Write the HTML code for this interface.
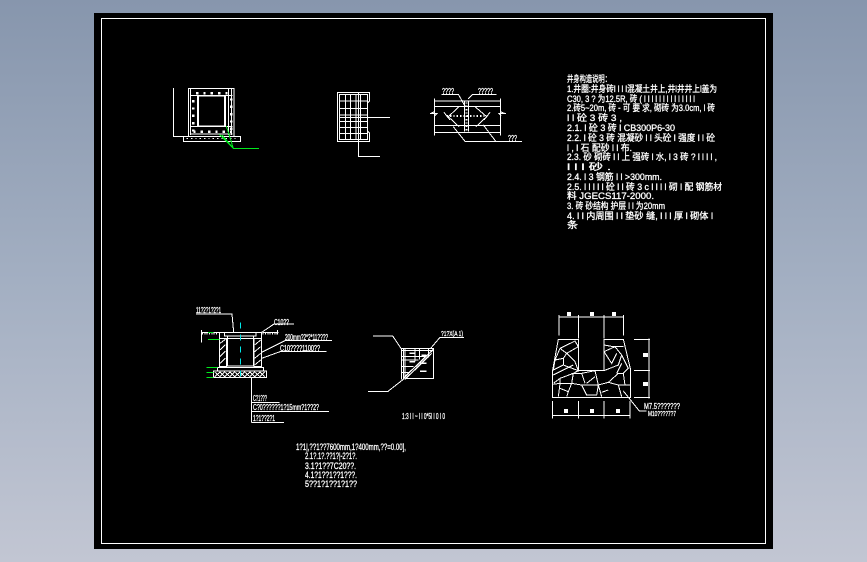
<!DOCTYPE html>
<html><head><meta charset="utf-8"><title>CAD</title>
<style>
html,body{margin:0;padding:0;width:867px;height:562px;overflow:hidden;background:linear-gradient(180deg,#8796ad 0%,#a3afc2 50%,#c2c6d3 100%);}
svg{position:absolute;left:0;top:0;display:block;shape-rendering:crispEdges}
text{font-family:"Liberation Sans","Noto Sans CJK SC",sans-serif;fill:#fff;stroke:#fff;stroke-width:.3}
</style></head><body>
<svg width="867" height="562" viewBox="0 0 867 562">
<rect x="94" y="13" width="679" height="536" fill="#000"/>
<rect x="101.5" y="18.5" width="664" height="525" fill="none" stroke="#fff"/>

<!-- fig 1 -->
<g transform="translate(160 70) scale(.33333)" fill="none" stroke="#fff" stroke-width="3">
<path d="M41 54V199H222M85 54V199M222 54V199M85 56H222"/>
<path d="M70 199H242V214H70Z"/>
<path d="M92 56V195M215 56V195M92 76H218M92 170H218M92 192H218M197 76V170M205 56V195"/>
<path d="M116 78H194V168H116ZM112 78V168"/>
<path stroke-width="8" stroke-dasharray="7 15" d="M108 70H205M100 90V188M214 85V188M100 185H215"/>
<path stroke-width="3" stroke-dasharray="4 9" d="M80 206H235"/>
<path stroke="#00e81c" stroke-width="3" d="M199 168L220 235H297M178 193L220 235M186 195L216 230"/>
</g>

<!-- fig 2 & 3 -->
<g transform="translate(320 75) scale(.33333)" fill="none" stroke="#fff" stroke-width="3">
<path d="M52 52H148V78L142 85V168L148 174V200H52Z"/>
<path d="M58 58H142V193H58ZM76 58V193M92 58V193M108 58V193M122 58V193M58 78H142M58 100H142M58 120H142M58 140H142M58 158H142M58 176H142"/>
<path d="M115 52V200M60 127H210M115 200V244H180"/>
<path d="M344 70V182M541 70V182M344 78H541M344 95H541M344 152H541M344 172H541"/>
<path d="M330 116H350L344 122M558 116H538L544 122M344 110L330 116M541 110L556 116"/>
<path d="M417 95L385 125L417 155M372 112L390 135M465 95L500 125L468 155M510 112L492 135"/>
<path d="M434 80V170M446 80V170"/>
<path stroke-width="6" stroke-dasharray="4 6" d="M440 82V170M380 123H500"/>
<path d="M364 58H415L436 95M530 58H458L444 72M400 155L436 200H606M490 150L528 200"/>
</g>
<text x="442" y="94" font-size="8" textLength="12" lengthAdjust="spacingAndGlyphs">????</text>
<text x="478" y="94" font-size="8" textLength="15" lengthAdjust="spacingAndGlyphs">?????</text>
<text x="508" y="141" font-size="8" textLength="9" lengthAdjust="spacingAndGlyphs">???</text>

<!-- notes -->
<g font-size="9">
<text x="567" y="82" textLength="44" lengthAdjust="spacingAndGlyphs">井身构造说明：</text>
<text x="567" y="92" textLength="150" lengthAdjust="spacingAndGlyphs">1.井圈:井身砖l l l l混凝土井上,井l井井上l盖为</text>
<text x="567" y="102" textLength="128" lengthAdjust="spacingAndGlyphs">C30, 3 ? 为12.5R, 砖 ( l l l l l l l l l l l l l l</text>
<text x="567" y="111" textLength="148" lengthAdjust="spacingAndGlyphs">2.砖5~20m, 砖 - 可 要 求, 砌砖 为3.0cm, l 砖</text>
<text x="567" y="121" textLength="55" lengthAdjust="spacingAndGlyphs">l l 砼 3 砖 3 ,</text>
<text x="567" y="131" textLength="108" lengthAdjust="spacingAndGlyphs">2.1. l 砼 3 砖 l CB300P6-30</text>
<text x="567" y="141" textLength="148" lengthAdjust="spacingAndGlyphs">2.2. l 砼 3 砖 混凝砂 l l 头砼 l 强度 l l 砼</text>
<text x="567" y="151" textLength="65" lengthAdjust="spacingAndGlyphs">l , l 石 配砂 l l 布.</text>
<text x="567" y="160" textLength="150" lengthAdjust="spacingAndGlyphs">2.3. 砂 砌砖 l l 上 强砖 l 水, l 3 砖 ? l l l l ,</text>
<text x="567" y="170" textLength="44" lengthAdjust="spacingAndGlyphs">l l l 砂 .</text>
<text x="567" y="180" textLength="95" lengthAdjust="spacingAndGlyphs">2.4. l 3 钢筋 l l &gt;300mm.</text>
<text x="567" y="190" textLength="155" lengthAdjust="spacingAndGlyphs">2.5. l l l l l 砼 l l 砖 3 c l l l l 砌 l 配 钢筋材</text>
<text x="567" y="199" textLength="87" lengthAdjust="spacingAndGlyphs">料 JGECS117-2000.</text>
<text x="567" y="209" textLength="98" lengthAdjust="spacingAndGlyphs">3. 砖 砂结构 护层 l l 为20mm</text>
<text x="567" y="219" textLength="146" lengthAdjust="spacingAndGlyphs">4. l l 内周围 l l 垫砂 缝, l l l 厚 l 砌体 l</text>
<text x="567" y="228" textLength="11" lengthAdjust="spacingAndGlyphs">条</text>
</g>

<!-- fig 4 -->
<g transform="translate(180 300) scale(.33333)" fill="none" stroke="#fff" stroke-width="3">
<path d="M48 42H156L161 97"/>
<path d="M64 97H118M248 97H296M64 90V128M292 90V104"/>
<path stroke-width="6" stroke-dasharray="3 4" d="M66 101H116M248 101H292"/>
<path d="M118 97H245V115H118ZM134 97V108H228V97"/>
<path d="M118 115V200H140V115ZM222 115V200H245V115ZM143 110V198M220 110V198"/>
<path d="M120 130L136 118M120 150L136 134M120 170L136 154M120 190L136 174M224 135L242 120M224 155L242 140M224 175L242 160M224 195L242 180"/>
<path d="M112 203H250V213H112ZM140 198H222"/>
<path d="M100 213H260V233H100Z"/>
<path d="M104 230L120 216L134 230L150 216L164 230L180 216L194 230L210 216L224 230L240 216L254 230M104 216L120 230L134 216L150 230L164 216L180 230L194 216L210 230L224 216L240 230L254 216"/>
<path stroke="#00e8e8" stroke-dasharray="18 18" d="M181 67V237"/>
<path stroke="#00e81c" d="M84 98H100M84 118H118M80 202H112M80 217H100M80 232H100"/>
<path d="M245 97L282 72H342M245 157L315 122H456M245 175L300 155H440"/>
<path d="M215 233V368M215 307H298M215 334H447M215 368H312"/>
</g>
<g font-size="8">
<text x="196" y="313" textLength="25" lengthAdjust="spacingAndGlyphs">11?2?1?2?1</text>
<text x="274" y="325" textLength="15" lengthAdjust="spacingAndGlyphs">C10??</text>
<text x="285" y="340" textLength="43" lengthAdjust="spacingAndGlyphs">200mm?2*2*11????</text>
<text x="280" y="351" textLength="40" lengthAdjust="spacingAndGlyphs">C10????1100??</text>
<text x="253" y="401" textLength="14" lengthAdjust="spacingAndGlyphs">C?1???</text>
<text x="253" y="410" textLength="66" lengthAdjust="spacingAndGlyphs">C?0??????1?15mm?1??2?</text>
<text x="253" y="421" textLength="22" lengthAdjust="spacingAndGlyphs">1?1??2?1</text>
</g>

<!-- fig 5 -->
<g transform="translate(360 320) scale(.33333)" fill="none" stroke="#fff" stroke-width="3">
<path d="M39 48H98L125 88M24 214H84L130 178M212 85L240 52H312"/>
<path d="M125 85H220V175H140"/>
<path d="M125 85V178M130 85V178M135 85V178M125 92H220M125 110H195M125 120H175M125 140H160M125 158H145M165 85V125M178 85V118M205 85V112"/>
<path stroke-width="4" d="M130 175L220 88M135 178L215 100M185 106H200M180 130H200M180 154H200M148 100H165M148 125H165"/>
</g>
<text x="441" y="336" font-size="7.5" textLength="22" lengthAdjust="spacingAndGlyphs">?1?X(A 1)</text>
<text x="402" y="419" font-size="8" textLength="43" lengthAdjust="spacingAndGlyphs">1:3 l l ~ l l 0*5l l 0 l 0</text>

<!-- fig 6 -->
<g transform="translate(540 305) scale(.33333)" fill="none" stroke="#fff" stroke-width="3">
<path d="M57 36H250M57 30V92M115 30V100M192 30V100M250 30V92"/>
<path d="M55 103H115V197H192V103H250L272 195V277H38V195Z"/>
<path d="M282 103H330M282 197H330M282 277H330M327 100V280"/>
<path d="M38 288V340M115 288V340M192 288V340M270 288V340M38 331H270"/>
<path d="M250 258L298 318H320"/>
<path d="M60 130L105 108L115 125L80 145L60 130M60 130L45 165L70 160L80 145M80 145L105 170L115 197L70 180L70 160M45 165L40 195L70 180M40 210L70 195L100 180M40 235L60 220L100 205L115 197M100 205L95 235L60 235L40 238M60 220L60 235M60 235L55 275M60 250L85 260L95 235M85 260L80 275M95 235L125 240L140 270L170 270L175 240L125 240M95 205L125 205L135 235M125 205L165 197L175 240L205 232L235 205M165 215L140 235M192 197L235 180L245 150L225 125L192 140M192 120L220 125L250 125M192 140L215 175L230 145M245 150L265 190L250 205L235 205M245 175L230 205M205 232L175 240L185 275M205 232L235 240L245 275M235 240L270 240M250 205L255 240M205 255L185 262"/>
</g>
<g fill="#fff">
<rect x="567" y="312" width="4" height="4"/><rect x="590" y="312" width="4" height="4"/><rect x="612" y="312" width="4" height="4"/>
<rect x="643" y="353" width="5" height="4"/><rect x="643" y="382" width="5" height="4"/>
<rect x="564" y="409" width="4" height="4"/><rect x="590" y="409" width="4" height="4"/><rect x="616" y="409" width="4" height="4"/>
</g>
<text x="644" y="409" font-size="8" textLength="36" lengthAdjust="spacingAndGlyphs">M7.5???????</text>
<text x="648" y="416" font-size="7.5" textLength="28" lengthAdjust="spacingAndGlyphs">M10????7?7</text>

<!-- bottom notes -->
<g font-size="9">
<text x="296" y="450" textLength="110" lengthAdjust="spacingAndGlyphs">1?1|,??1??7600mm,1?400mm,??=0.00],</text>
<text x="305" y="459" textLength="52" lengthAdjust="spacingAndGlyphs">2.1?.1?.??1?|-2?1?.</text>
<text x="305" y="469" textLength="51" lengthAdjust="spacingAndGlyphs">3.1?1??7C20??.</text>
<text x="305" y="478" textLength="52" lengthAdjust="spacingAndGlyphs">4.1?1??1??1???.</text>
<text x="305" y="487" textLength="52" lengthAdjust="spacingAndGlyphs">5??1?1??1?1??</text>
</g>
</svg>
</body></html>
